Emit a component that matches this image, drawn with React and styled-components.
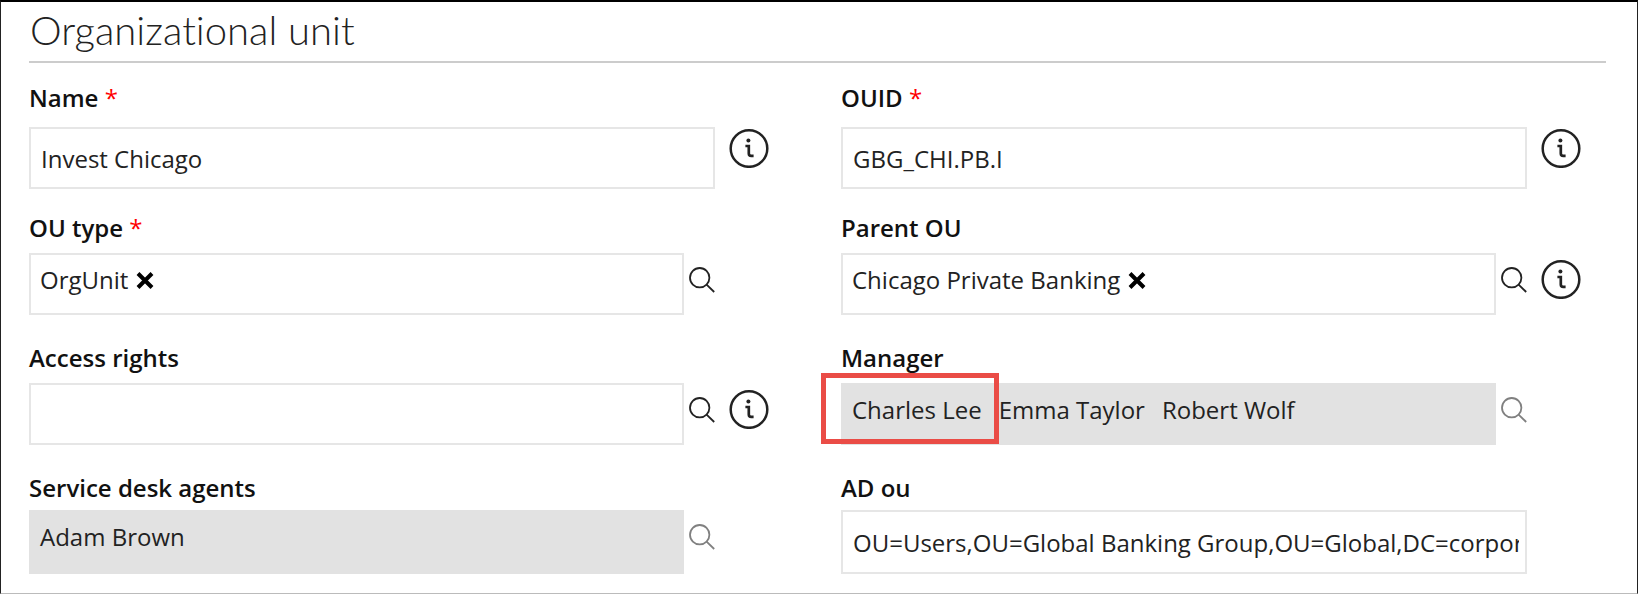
import React, { useState } from "react";
import styled, { createGlobalStyle } from "styled-components";

const GlobalStyle = createGlobalStyle`
  * {
    box-sizing: border-box;
  }

  body {
    margin: 0;
    background: #fff;
    color: #222;
    font-family: "Open Sans", "Noto Sans", sans-serif;
    font-size: 24px;
    line-height: 32px;
  }
`;

const fields = [
  { id: "name", label: "Name", required: true, type: "text", value: "Invest Chicago", info: true, space: "loose" },
  { id: "ouid", label: "OUID", required: true, type: "text", value: "GBG_CHI.PB.I", info: true, space: "loose" },
  { id: "ou-type", label: "OU type", required: true, type: "lookup", items: ["OrgUnit"] },
  { id: "parent-ou", label: "Parent OU", type: "lookup", items: ["Chicago Private Banking"], info: true },
  { id: "access-rights", label: "Access rights", type: "lookup", items: [], info: true },
  {
    id: "manager",
    label: "Manager",
    type: "lookup",
    items: ["Charles Lee", "Emma Taylor", "Robert Wolf"],
    highlighted: "Charles Lee",
    disabled: true,
  },
  { id: "agents", label: "Service desk agents", type: "lookup", items: ["Adam Brown"], disabled: true, space: "tight" },
  {
    id: "ad-ou",
    label: "AD ou",
    type: "text",
    value: "OU=Users,OU=Global Banking Group,OU=Global,DC=corporate",
    space: "tight",
  },
];

// gap under the label and height of the box
const sizes = {
  loose: { gap: 13, height: 62 },
  normal: { gap: 9, height: 62 },
  tight: { gap: 6, height: 64 },
};

const SearchIcon = () => (
  <svg width="26" height="26" viewBox="0 0 26 26" fill="none" stroke="currentColor">
    <circle cx="10.7" cy="10.7" r="9.7" strokeWidth="1.8" />
    <path d="M17.6 17.6L25.2 25" strokeWidth="1.8" />
  </svg>
);

const InfoIcon = () => (
  <svg width="40" height="40" viewBox="0 0 40 40" fill="none" stroke="currentColor">
    <circle cx="20" cy="20.5" r="18.3" strokeWidth="2.5" />
    <circle cx="19.4" cy="12.6" r="2" fill="currentColor" stroke="none" />
    <path d="M16.4 18H19.8V25.4Q19.8 27.8 22.2 27.8H24.6" strokeWidth="2.7" />
  </svg>
);

const RemoveIcon = () => (
  <svg width="18" height="18" viewBox="0 0 18 18" fill="none" stroke="currentColor">
    <path d="M2 2.5L16 16.5M16 2.5L2 16.5" strokeWidth="4" />
  </svg>
);

// single or multi value picker with a search button next to it
const Lookup = ({ field, height }) => {
  const [items, setItems] = useState(field.items);

  return (
    <>
      <LookupBox $disabled={field.disabled} $height={height}>
        {items.map((item) => (
          <Item key={item}>
            {item}
            {!field.disabled && (
              <RemoveButton
                type="button"
                aria-label={`Remove ${item}`}
                onClick={() => setItems(items.filter((i) => i !== item))}
              >
                <RemoveIcon />
              </RemoveButton>
            )}
            {field.highlighted === item && <Highlight />}
          </Item>
        ))}
        <LookupInput id={field.id} disabled={field.disabled} />
      </LookupBox>
      <SearchButton type="button" aria-label={`Search ${field.label}`} disabled={field.disabled}>
        <SearchIcon />
      </SearchButton>
    </>
  );
};

const Field = ({ field }) => {
  const { gap, height } = sizes[field.space || "normal"];
  const isLookup = field.type === "lookup";

  return (
    <div>
      <Label htmlFor={field.id} $gap={gap}>
        {field.label}
        {field.required && <Required> *</Required>}
      </Label>
      <Control>
        {isLookup ? (
          <Lookup field={field} height={height} />
        ) : (
          <TextInput id={field.id} defaultValue={field.value} $height={height} />
        )}
        <InfoSlot $lookup={isLookup}>
          {field.info && (
            <IconButton type="button" aria-label={`About ${field.label}`}>
              <InfoIcon />
            </IconButton>
          )}
        </InfoSlot>
      </Control>
    </div>
  );
};

const App = () => {
  return (
    <Page>
      <GlobalStyle />
      <Title>Organizational unit</Title>
      <Form>
        {fields.map((field) => (
          <Field key={field.id} field={field} />
        ))}
      </Form>
    </Page>
  );
};

const Page = styled.main`
  min-height: 100vh;
  padding: 6px 31px 19px 28px;
  border: 1px solid #222;
  border-top: 2px solid #000;
  border-bottom-color: #bbb;
`;

const Title = styled.h1`
  margin: 0;
  padding: 0 0 9px 1px;
  border-bottom: 2px solid #ccc;
  color: #222;
  font-family: Lato, "Open Sans", sans-serif;
  font-size: 40px;
  font-weight: 300;
  font-variant-ligatures: none;
  line-height: 44px;
`;

const Form = styled.form`
  display: grid;
  grid-template-columns: repeat(2, minmax(0, 1fr));
  grid-template-rows: repeat(3, minmax(130px, auto)) auto;
  column-gap: 72px;
  padding: 19px 25px 0 0;
`;

const Label = styled.label`
  display: block;
  margin-bottom: ${({ $gap }) => $gap}px;
  color: #111;
  font-weight: 600;
`;

const Required = styled.span`
  color: #f00;
  font-weight: 400;
`;

const Control = styled.div`
  display: flex;
  align-items: flex-start;
`;

const TextInput = styled.input`
  flex: 1;
  min-width: 0;
  height: ${({ $height }) => $height}px;
  padding: 0 6px 0 10px;
  border: 2px solid #e6e6e6;
  border-radius: 0;
  background: #fff;
  color: inherit;
  font: inherit;
`;

const LookupBox = styled.div`
  display: flex;
  flex: 1;
  gap: 17px;
  min-width: 0;
  min-height: ${({ $height }) => $height}px;
  padding: 9px 8px 9px 9px;
  border: 2px solid ${({ $disabled }) => ($disabled ? "#e2e2e2" : "#e6e6e6")};
  background: ${({ $disabled }) => ($disabled ? "#e2e2e2" : "#fff")};
`;

const Item = styled.span`
  display: flex;
  align-items: center;
  position: relative;
  height: 32px;
  white-space: nowrap;
`;

const LookupInput = styled.input`
  flex: 1;
  min-width: 0;
  height: 32px;
  padding: 0;
  border: 0;
  outline: 0;
  background: transparent;
  font: inherit;
`;

const IconButton = styled.button`
  display: block;
  padding: 0;
  border: 0;
  background: none;
  color: #222;
  cursor: pointer;

  & svg {
    display: block;
  }
`;

const RemoveButton = styled(IconButton)`
  margin-left: 8px;
  color: #000;
`;

const SearchButton = styled(IconButton)`
  margin: 14px 0 0 5px;

  &:disabled {
    color: #808080;
    cursor: default;
  }
`;

const InfoSlot = styled.div`
  width: 54px;
  padding: ${({ $lookup }) => ($lookup ? "6px" : "1px")} 0 0 14px;
`;

const Highlight = styled.span`
  position: absolute;
  inset: -21px -17px -18px -31px;
  border: 5px solid #ea4c46;
  pointer-events: none;
`;

export default App;
